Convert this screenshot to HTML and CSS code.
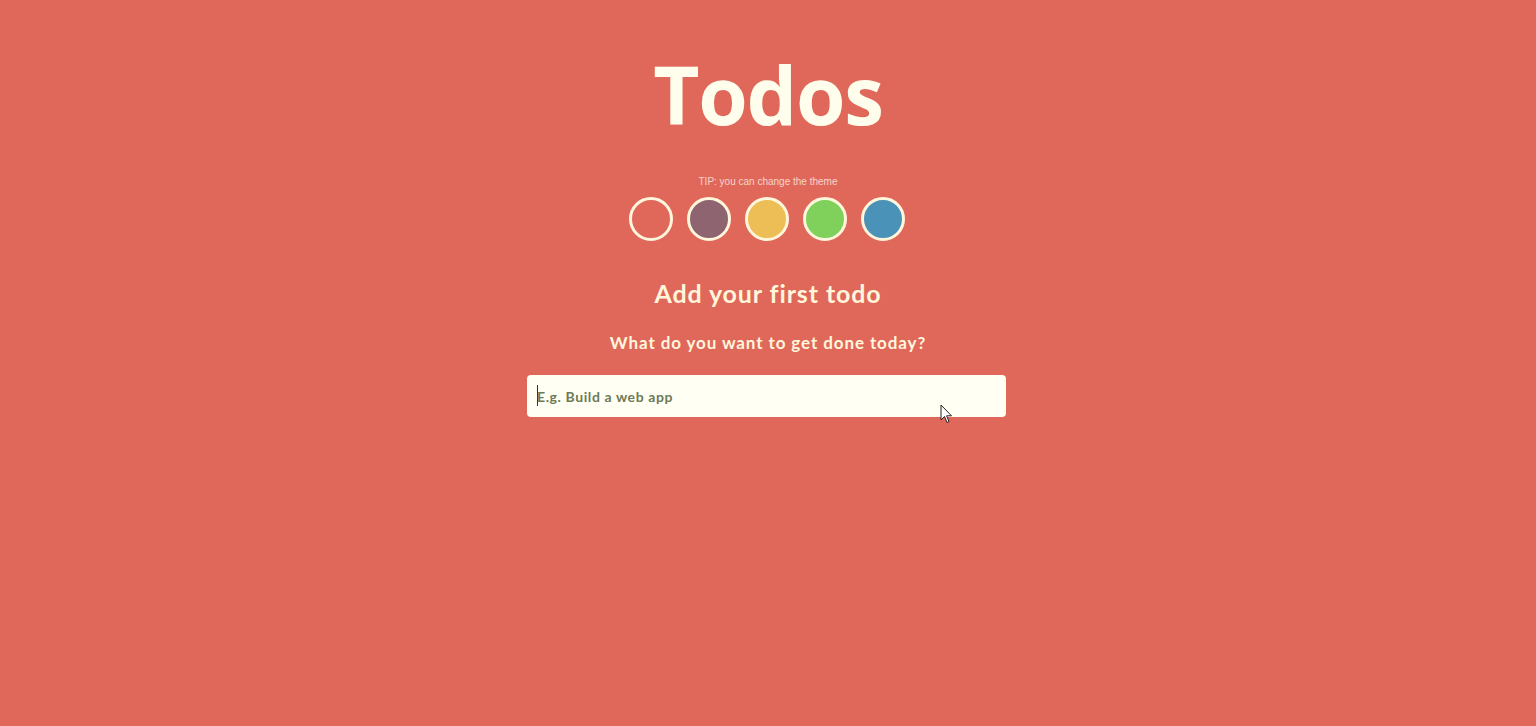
FILE: index.html
```html
<!DOCTYPE html>
<html lang="en">
<head>
<meta charset="utf-8">
<title>Todos</title>
<link rel="stylesheet" href="styles.css">
</head>
<body>
<main class="app">
  <h1 class="title">Todos</h1>
  <p class="tip">TIP: you can change the theme</p>
  <div class="themes">
    <button class="theme theme-red"></button>
    <button class="theme theme-purple"></button>
    <button class="theme theme-yellow"></button>
    <button class="theme theme-green"></button>
    <button class="theme theme-blue"></button>
  </div>
  <h2 class="heading">Add your first todo</h2>
  <p class="question">What do you want to get done today?</p>
  <div class="input-wrap">
    <span class="caret"></span>
    <input class="todo-input" type="text" placeholder="E.g. Build a web app">
    <svg class="pointer" width="14" height="20" viewBox="0 0 14 20"><path d="M1 1 L1 16 L4.5 12.5 L7 18.5 L9 17.6 L6.6 11.8 L11.5 11.8 Z" fill="#fff" stroke="#222" stroke-width="1"/></svg>
  </div>
</main>
</body>
</html>
```
FILE: styles.css
```css
html, body {
  margin: 0;
  padding: 0;
  height: 100%;
}
body {
  background: #e0685b;
  font-family: "Open Sans", "Liberation Sans", sans-serif;
  color: #fffbe6;
}
.app {
  display: flex;
  flex-direction: column;
  align-items: center;
  padding-top: 42px;
}
.title {
  margin: 0;
  font-size: 80px;
  font-weight: 700;
  line-height: 104px;
  color: #fffdec;
  letter-spacing: -1.3px;
}
.tip {
  margin: 30px 0 0;
  font-family: "Liberation Sans", Arial, sans-serif;
  font-size: 10px;
  line-height: 12px;
  color: #f8d4c8;
}
.themes {
  display: flex;
  gap: 14px;
  margin-top: 9px;
  margin-right: 2px;
}
.theme {
  width: 44px;
  height: 44px;
  border-radius: 50%;
  border: 3px solid #fff6dc;
  padding: 0;
  box-sizing: border-box;
}
.theme-red { background: #e0685b; }
.theme-purple { background: #8d6470; }
.theme-yellow { background: #ecbe55; }
.theme-green { background: #80d05c; }
.theme-blue { background: #4a92b8; }
.heading {
  margin: 36px 0 0;
  font-family: "Lato", "Open Sans", sans-serif;
  font-size: 25px;
  font-weight: 700;
  line-height: 32px;
  color: #fff6dc;
  letter-spacing: 0.9px;
}
.question {
  margin: 23px 0 0;
  font-family: "Lato", "Open Sans", sans-serif;
  font-size: 17px;
  font-weight: 700;
  line-height: 22px;
  color: #fff6dc;
  letter-spacing: 0.9px;
}
.input-wrap {
  position: relative;
  margin-top: 21px;
  margin-right: 3px;
  width: 479px;
}
.todo-input {
  display: block;
  width: 100%;
  height: 42px;
  box-sizing: border-box;
  border: none;
  border-radius: 4px;
  background: #fffff4;
  padding: 0 10px;
  font-family: "Lato", "Open Sans", sans-serif;
  font-size: 14px;
  font-weight: 700;
  letter-spacing: 0.6px;
  outline: none;
}
.todo-input::placeholder {
  color: #6e7a55;
}
.caret {
  position: absolute;
  left: 10px;
  top: 10px;
  width: 1px;
  height: 21px;
  background: #333;
  z-index: 1;
}
.pointer {
  position: absolute;
  left: 413px;
  top: 29px;
}
```
